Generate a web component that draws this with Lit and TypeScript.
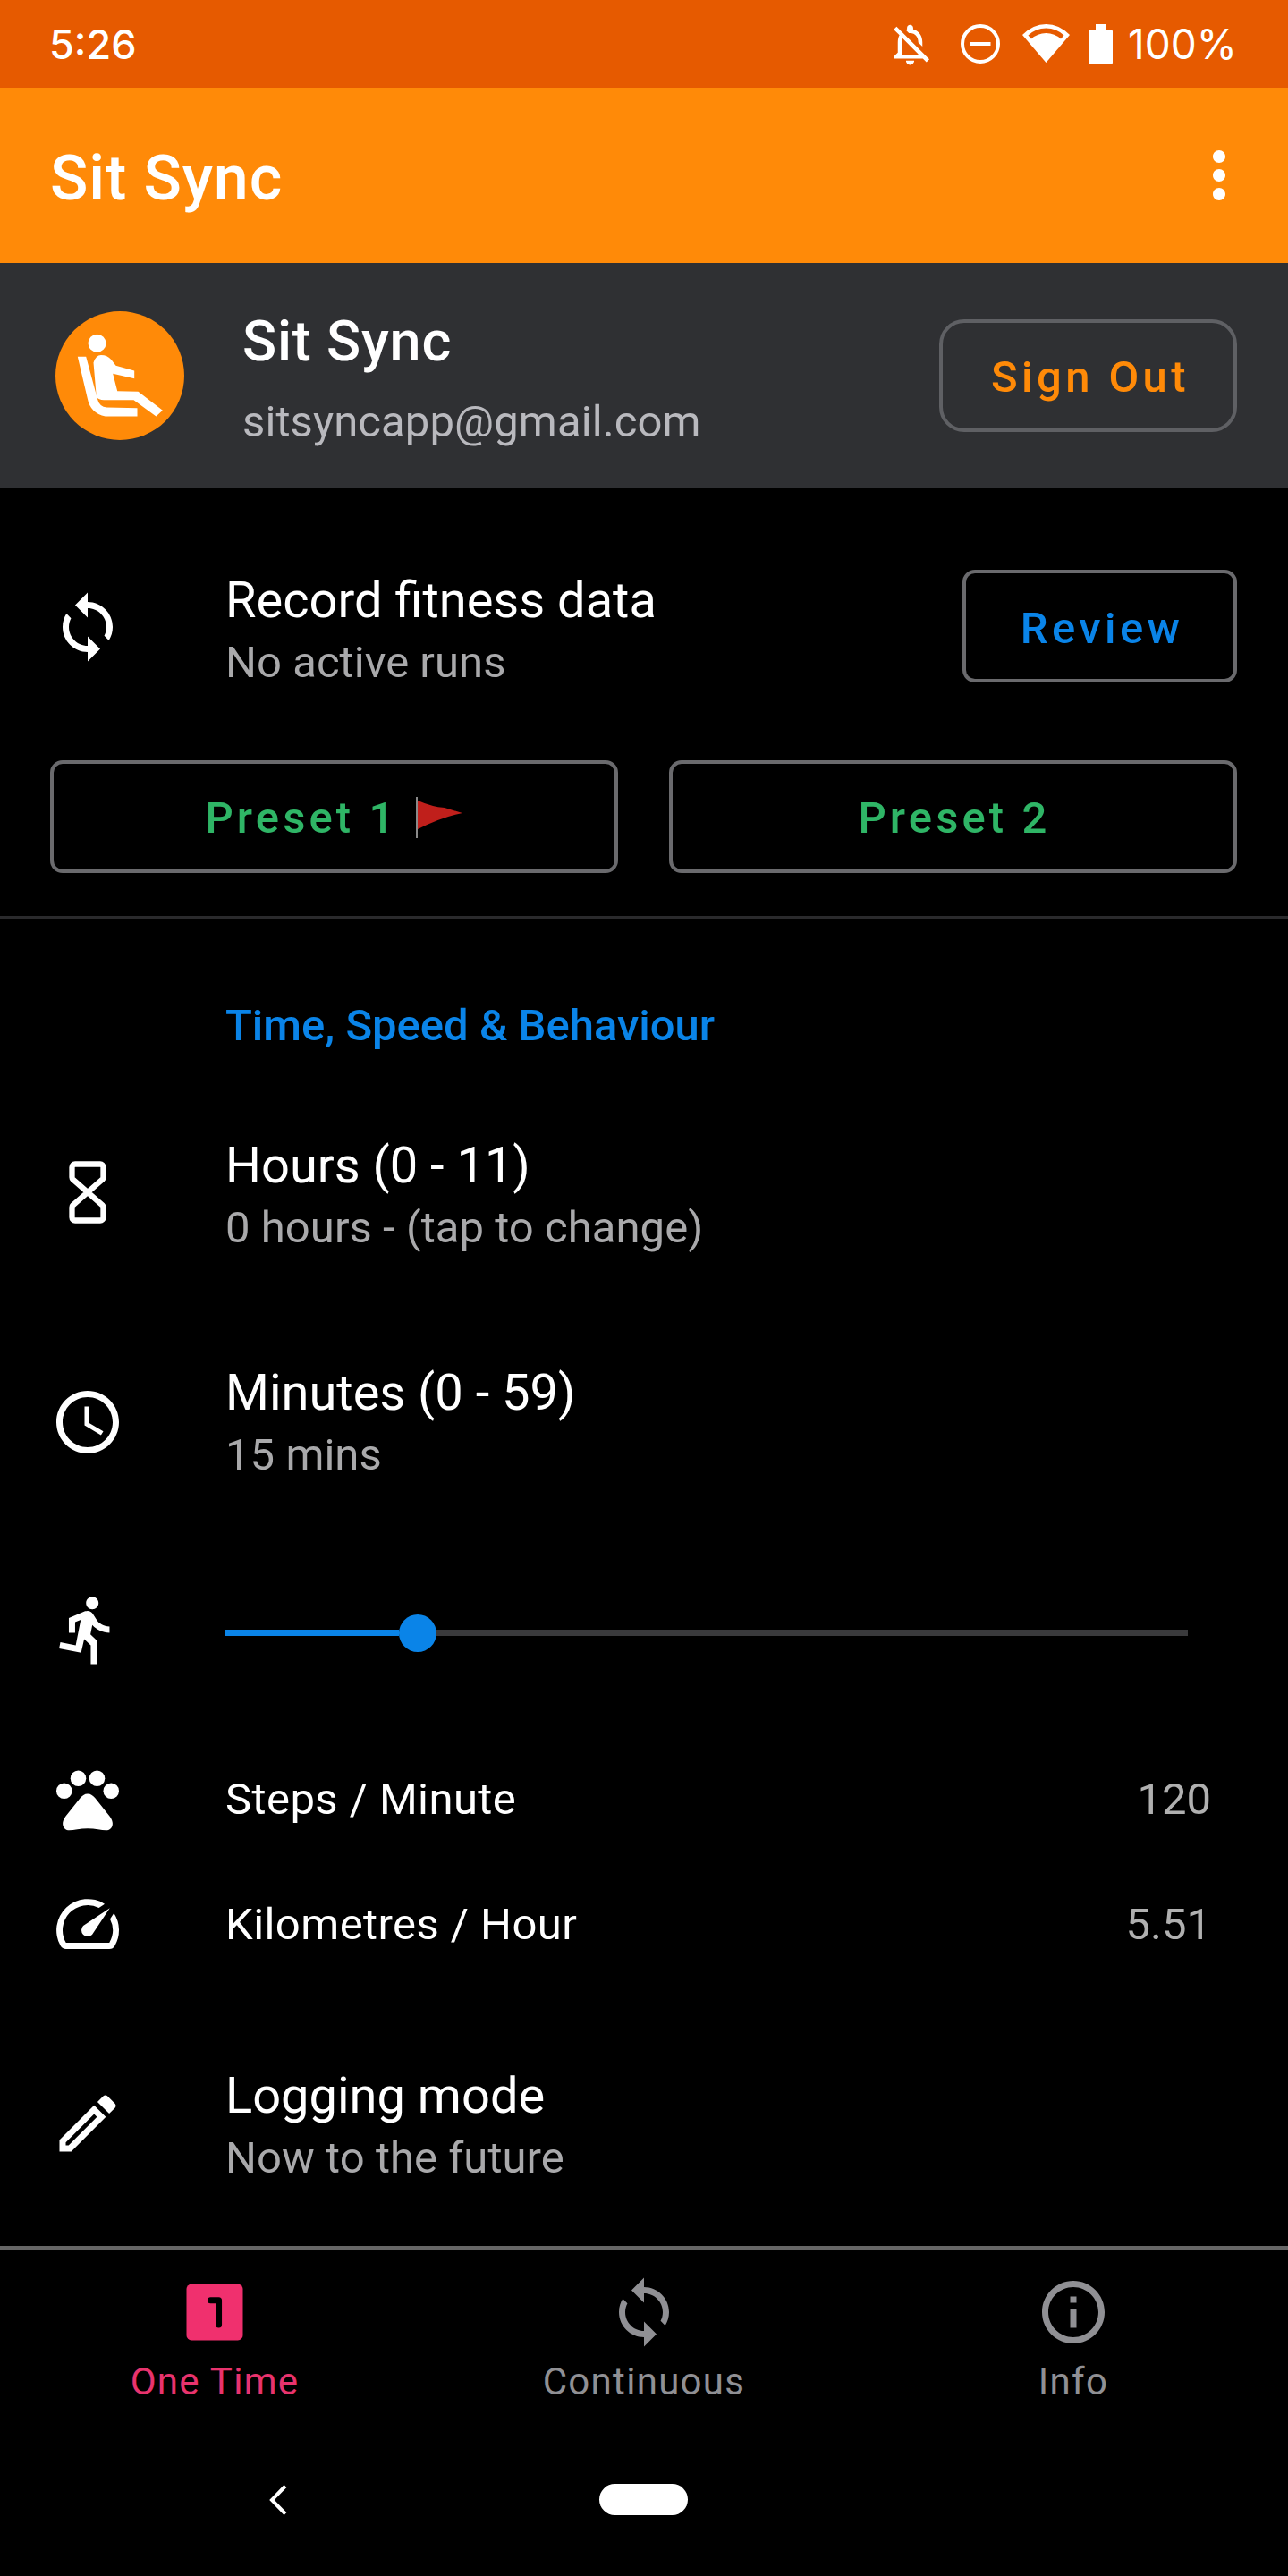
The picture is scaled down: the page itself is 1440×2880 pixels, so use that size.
import {css, html, LitElement} from 'lit';
import {customElement} from 'lit/decorators.js';

const PATHS = {
    sync: 'M12 4V1L8 5l4 4V6c3.31 0 6 2.69 6 6 0 1.01-.25 1.97-.7 2.8l1.46 1.46C19.54 15.03 20 13.57 20 12c0-4.42-3.58-8-8-8zm0 14c-3.31 0-6-2.69-6-6 0-1.01.25-1.97.7-2.8L5.24 7.74C4.46 8.97 4 10.43 4 12c0 4.42 3.58 8 8 8v3l4-4-4-4v3z',
    clock: 'M11.99 2C6.47 2 2 6.48 2 12s4.47 10 9.99 10C17.52 22 22 17.52 22 12S17.52 2 11.99 2zM12 20c-4.42 0-8-3.58-8-8s3.58-8 8-8 8 3.58 8 8-3.58 8-8 8zM12.5 7H11v6l5.25 3.15.75-1.23-4.5-2.67z',
    run: 'M13.49 5.48c1.1 0 2-.9 2-2s-.9-2-2-2-2 .9-2 2 .9 2 2 2zm-3.6 13.9l1-4.4 2.1 2v6h2v-7.5l-2.1-2 .6-3c1.3 1.5 3.3 2.5 5.5 2.5v-2c-1.9 0-3.5-1-4.3-2.4l-1-1.6c-.4-.6-1-1-1.7-1-.3 0-.5.1-.8.1l-5.2 2.2v4.7h2v-3.4l1.8-.7-1.6 8.1-4.9-1-.4 2 7 1.4z',
    speed: 'M20.38 8.57l-1.23 1.85a8 8 0 0 1-.22 7.58H5.07A8 8 0 0 1 15.58 6.85l1.85-1.23A10 10 0 0 0 3.35 19a2 2 0 0 0 1.72 1h13.85a2 2 0 0 0 1.74-1 10 10 0 0 0-.27-10.44zm-9.79 6.84a2 2 0 0 0 2.83 0l5.66-8.49-8.49 5.66a2 2 0 0 0 0 2.83z',
    pencil: 'M14.06 9.02l.92.92L5.92 19H5v-.92l9.06-9.06M17.66 3c-.25 0-.51.1-.7.29l-1.83 1.83 3.75 3.75 1.83-1.83c.39-.39.39-1.02 0-1.41l-2.34-2.34c-.2-.2-.45-.29-.71-.29zm-3.6 3.19L3 17.25V21h3.75L17.81 9.94l-3.75-3.75z',
    info: 'M11 7h2v2h-2zm0 4h2v6h-2zm1-9C6.48 2 2 6.48 2 12s4.48 10 10 10 10-4.48 10-10S17.52 2 12 2zm0 18c-4.41 0-8-3.59-8-8s3.59-8 8-8 8 3.59 8 8-3.59 8-8 8z',
    more: 'M12 8c1.1 0 2-.9 2-2s-.9-2-2-2-2 .9-2 2 .9 2 2 2zm0 2c-1.1 0-2 .9-2 2s.9 2 2 2 2-.9 2-2-.9-2-2-2zm0 6c-1.1 0-2 .9-2 2s.9 2 2 2 2-.9 2-2-.9-2-2-2z',
    bellOff: 'M12 22c1.1 0 2-.9 2-2h-4c0 1.1.9 2 2 2zm0-15.5c2.49 0 4 2.02 4 4.5v.1l2 2V11c0-3.07-1.63-5.64-4.5-6.32V4c0-.83-.67-1.5-1.5-1.5s-1.5.67-1.5 1.5v.68c-.24.06-.47.15-.69.23l1.64 1.64c.18-.02.36-.05.55-.05zM5.41 3.35L4 4.76l2.81 2.81C6.29 8.57 6 9.74 6 11v5l-2 2v1h14.24l1.74 1.74 1.41-1.41L5.41 3.35zM16 17H8v-6c0-.68.12-1.32.34-1.9L16 16.76V17z',
    pawPad: 'M12 10.4c-1 0-1.8.6-2.4 1.4L5 17.6c-.8 1-1.1 2-.9 2.9.2 1 1 1.6 2 1.6 1.500 0 3.500-.6 5.900-.6s4.400.6 5.900.6c1 0 1.800-.6 2-1.600.2-.9-.1-1.900-.9-2.900L14.400 11.800C13.800 11 13 10.400 12 10.400z',
};

const icon = (d: string, extra = '') => html`<svg class="icon ${extra}" viewBox="0 0 24 24" fill="currentColor"><path d=${d}></path></svg>`;

const hourglass = html`<svg class="icon nudge-hours" viewBox="0 0 24 24" fill="none" stroke="currentColor" stroke-width="1.800" stroke-linejoin="round">
    <path d="M8 3h8a1 1 0 0 1 1 1v3.200a1 1 0 0 1-.3.7l-9.400 8.200a1 1 0 0 0-.3.7V20a1 1 0 0 0 1 1h8a1 1 0 0 0 1-1v-3.200a1 1 0 0 0-.3-.7L7.300 7.900a1 1 0 0 1-.3-.7V4a1 1 0 0 1 1-1z"></path>
</svg>`;

const pawIcon = html`<svg class="icon" viewBox="0 0 24 24" fill="currentColor">
    <circle cx="4.5" cy="9.5" r="2.5"></circle>
    <circle cx="9" cy="5.5" r="2.5"></circle>
    <circle cx="15" cy="5.5" r="2.5"></circle>
    <circle cx="19.5" cy="9.5" r="2.5"></circle>
    <path d=${PATHS.pawPad}></path>
</svg>`;

const oneIcon = html`<svg class="icon" viewBox="0 0 24 24">
    <rect x="3" y="3" width="18" height="18" rx="1.6" fill="currentColor"></rect>
    <path d="M10.7 8.2h2.6V16" fill="none" stroke="#000" stroke-width="2" stroke-linecap="round" stroke-linejoin="round"></path>
</svg>`;

const seatLogo = html`<svg class="logo" viewBox="0 0 144 144">
    <circle cx="72" cy="72" r="72" fill="#ff8a08"></circle>
    <circle cx="46.5" cy="35.8" r="10" fill="#fff"></circle>
    <path fill="#fff" d="M24.8 50.8h9.400l12.600 46.700Q49 107 57.500 107.500l34 .7v9.300H55.800Q39 114 35.800 97.500z"></path>
    <path fill="#fff" d="M42.500 57.500Q45 49 51 49q7 0 11.500 5.200l5 6.600 20.700 5.700v8.700l-24-5.400 5 19.400 23.300.6 27.300 21-7.300 6.700-25-18.300H54.200q-6 0-8.400-3.400z"></path>
</svg>`;

const flag = html`<svg class="flag" viewBox="0 0 56 46">
    <rect x="0" y="0" width="2" height="46" fill="#8a8a8a"></rect>
    <path d="M2 4Q18 11 32 12L52 18Q30 22 2 36z" fill="#c01f1b"></path>
</svg>`;

@customElement('app-root')
export class AppRoot extends LitElement {

    static styles = css`
        :host {
            display: block;
            width: 1440px;
            height: 2880px;
            background: #000;
            color: #fff;
            font-family: Roboto, "Liberation Sans", sans-serif;
            overflow: hidden;
        }

        .icon {
            display: block;
            width: 84px;
            height: 84px;
            flex: none;
        }

        .status {
            height: 98px;
            background: #e65a00;
            display: flex;
            align-items: center;
            justify-content: space-between;
            padding: 0 57px 0 55px;
            box-sizing: border-box;
        }

        .time {
            font-family: Inter, Roboto, sans-serif;
            font-size: 45px;
            font-weight: 500;
        }

        .status-right {
            display: flex;
            align-items: center;
        }

        .status-right svg {
            display: block;
            flex: none;
        }

        .bell { width: 55px; height: 55px; margin-right: 29px; }
        .dnd { width: 44px; height: 44px; margin-right: 25px; }
        .wifi { width: 53px; height: 44px; margin-right: 21px; }
        .battery { width: 27px; height: 45px; margin-right: 17px; }

        .percent {
            font-family: Inter, Roboto, sans-serif;
            font-size: 46px;
            font-weight: 400;
        }

        .appbar {
            height: 196px;
            background: #ff8a08;
            display: flex;
            align-items: center;
            justify-content: space-between;
            padding: 0 35px 0 56px;
        }

        .appbar-title {
            font-size: 70px;
            font-weight: 500;
            letter-spacing: 0.875px;
            padding-top: 6px;
        }

        .account {
            height: 252px;
            background: #2f3033;
            display: flex;
            align-items: center;
            padding: 0 57px 0 62px;
            box-sizing: border-box;
        }

        .logo {
            width: 144px;
            height: 144px;
            flex: none;
            margin-right: 65px;
        }

        .account-text {
            flex: 1;
            padding-top: 13px;
        }

        .account-name {
            font-size: 63px;
            font-weight: 500;
            line-height: 78px;
            letter-spacing: 0.79px;
        }

        .account-mail {
            font-size: 49px;
            line-height: 76px;
            margin-top: 13px;
            color: #b9b9be;
            letter-spacing: 0.1px;
        }

        .btn {
            box-sizing: border-box;
            height: 126px;
            border: 4px solid #6a6a6d;
            border-radius: 14px;
            background: transparent;
            display: flex;
            align-items: center;
            justify-content: center;
            font-family: inherit;
            font-size: 49px;
            font-weight: 500;
            letter-spacing: 4.4px;
            padding: 2px 0 0 5px;
        }

        .sign-out {
            width: 333px;
            border-radius: 28px;
            color: #ff8a08;
            border-color: #5f6064;
        }

        .review {
            width: 307px;
            color: #0a84e8;
            padding-top: 5px;
        }

        .preset {
            flex: 1;
            color: #2fb566;
            gap: 20px;
            letter-spacing: 4.1px;
            padding-left: 3px;
        }

        .flag {
            width: 56px;
            height: 46px;
        }

        .row {
            display: flex;
            align-items: center;
            padding-left: 56px;
            box-sizing: border-box;
        }

        .row .icon {
            margin-right: 112px;
        }

        .record {
            padding: 91px 57px 0 56px;
            height: 126px;
            box-sizing: content-box;
        }

        .record .icon {
            margin-top: 2px;
        }

        .record .row-text {
            padding-top: 7px;
        }

        .row-text {
            flex: 1;
        }

        .row-title {
            font-size: 56px;
            line-height: 74px;
        }

        .row-sub {
            font-size: 49px;
            line-height: 66px;
            color: #a9a9ab;
            letter-spacing: 0.05px;
        }

        .presets {
            display: flex;
            gap: 57px;
            padding: 0 57px 0 56px;
            margin-top: 87px;
        }

        .divider {
            height: 4px;
            background: #2a2a2c;
            margin-top: 48px;
        }

        .section-title {
            font-size: 49px;
            font-weight: 500;
            line-height: 60px;
            color: #0a84e8;
            padding: 89px 0 0 252px;
        }

        .tall {
            height: 254px;
        }

        .first {
            margin-top: 32px;
        }

        .nudge-hours {
            margin-bottom: 6px;
        }

        .slider-row {
            height: 217px;
            margin-bottom: 7px;
        }

        .row .nudge-run {
            margin-bottom: 7px;
        }

        .slider {
            width: 1076px;
            display: flex;
            align-items: center;
        }

        .track-on {
            height: 7px;
            background: #0a84e8;
        }

        .thumb {
            width: 42px;
            height: 42px;
            border-radius: 50%;
            background: #0a84e8;
            flex: none;
        }

        .track-off {
            flex: 1;
            height: 7px;
            background: #3a3a3c;
        }

        .stat {
            height: 140px;
            padding-right: 86px;
            font-size: 49px;
            letter-spacing: 0.43px;
        }

        .stat-label {
            flex: 1;
        }

        .stat-value {
            color: #b0b0b0;
            letter-spacing: 0;
        }

        .logging {
            height: 262px;
            margin-top: 24px;
            margin-bottom: 4px;
        }

        .row .nudge-pencil {
            margin-bottom: 4px;
        }

        .tabs {
            border-top: 4px solid #666;
            display: grid;
            grid-template-columns: repeat(3, 1fr);
            padding-top: 28px;
        }

        .tab {
            display: flex;
            flex-direction: column;
            align-items: center;
            color: #909094;
            font-size: 42px;
            line-height: 56px;
            letter-spacing: 1.3px;
            gap: 8px;
        }

        .tab.active {
            color: #e8336d;
        }

        .tab.active .icon {
            color: #f0306e;
        }

        .nav {
            display: flex;
            align-items: center;
            padding: 86px 0 0 301px;
        }

        .back {
            width: 20px;
            height: 34px;
            margin-right: 349px;
        }

        .home {
            width: 99px;
            height: 35px;
            border-radius: 18px;
            background: #fff;
        }
    `;

    renderStatus() {
        return html`
            <div class="status">
                <span class="time">5:26</span>
                <div class="status-right">
                    <svg class="bell" viewBox="0 0 24 24" fill="#fff"><path d=${PATHS.bellOff}></path></svg>
                    <svg class="dnd" viewBox="0 0 44 44">
                        <circle cx="22" cy="22" r="20" fill="none" stroke="#fff" stroke-width="4"></circle>
                        <rect x="10.5" y="20" width="23" height="4" fill="#fff"></rect>
                    </svg>
                    <svg class="wifi" viewBox="0 0 53 44">
                        <path d="M26.500 43 0 12Q12 0 26.500 0T53 12z" fill="#fff"></path>
                        <path d="M6.500 12.500Q15 4.500 26.500 4.500T46.500 12.500L43 16.500Q36 10 26.500 10T10 16.500z" fill="#e65a00"></path>
                    </svg>
                    <svg class="battery" viewBox="0 0 27 45">
                        <path d="M8 0h11v6h6a2 2 0 0 1 2 2v35a2 2 0 0 1-2 2H2a2 2 0 0 1-2-2V8a2 2 0 0 1 2-2h6z" fill="#fff"></path>
                    </svg>
                    <span class="percent">100%</span>
                </div>
            </div>`;
    }

    renderSlider(done: number) {
        return html`
            <div class="slider">
                <div class="track-on" style="width: ${done}px"></div>
                <div class="thumb"></div>
                <div class="track-off"></div>
            </div>`;
    }

    render() {
        return html`
            ${this.renderStatus()}
            <div class="appbar">
                <span class="appbar-title">Sit Sync</span>
                ${icon(PATHS.more)}
            </div>
            <div class="account">
                ${seatLogo}
                <div class="account-text">
                    <div class="account-name">Sit Sync</div>
                    <div class="account-mail">sitsyncapp@gmail.com</div>
                </div>
                <div class="btn sign-out">Sign Out</div>
            </div>
            <div class="row record">
                ${icon(PATHS.sync)}
                <div class="row-text">
                    <div class="row-title">Record fitness data</div>
                    <div class="row-sub">No active runs</div>
                </div>
                <div class="btn review">Review</div>
            </div>
            <div class="presets">
                <div class="btn preset">Preset 1 ${flag}</div>
                <div class="btn preset">Preset 2</div>
            </div>
            <div class="divider"></div>
            <div class="section-title">Time, Speed &amp; Behaviour</div>
            <div class="row tall first">
                ${hourglass}
                <div class="row-text">
                    <div class="row-title">Hours (0 - 11)</div>
                    <div class="row-sub">0 hours - (tap to change)</div>
                </div>
            </div>
            <div class="row tall">
                ${icon(PATHS.clock)}
                <div class="row-text">
                    <div class="row-title">Minutes (0 - 59)</div>
                    <div class="row-sub">15 mins</div>
                </div>
            </div>
            <div class="row slider-row">
                ${icon(PATHS.run, 'nudge-run')}
                ${this.renderSlider(194)}
            </div>
            <div class="row stat">
                ${pawIcon}
                <span class="stat-label">Steps / Minute</span>
                <span class="stat-value">120</span>
            </div>
            <div class="row stat">
                ${icon(PATHS.speed)}
                <span class="stat-label">Kilometres / Hour</span>
                <span class="stat-value">5.51</span>
            </div>
            <div class="row logging">
                ${icon(PATHS.pencil, 'nudge-pencil')}
                <div class="row-text">
                    <div class="row-title">Logging mode</div>
                    <div class="row-sub">Now to the future</div>
                </div>
            </div>
            <div class="tabs">
                <div class="tab active">${oneIcon}<span>One Time</span></div>
                <div class="tab">${icon(PATHS.sync)}<span>Continuous</span></div>
                <div class="tab">${icon(PATHS.info)}<span>Info</span></div>
            </div>
            <div class="nav">
                <svg class="back" viewBox="0 0 20 34" fill="none" stroke="#fff" stroke-width="4">
                    <path d="M18 1.500 3 17l15 15.500"></path>
                </svg>
                <div class="home"></div>
            </div>
        `;
    }
}
